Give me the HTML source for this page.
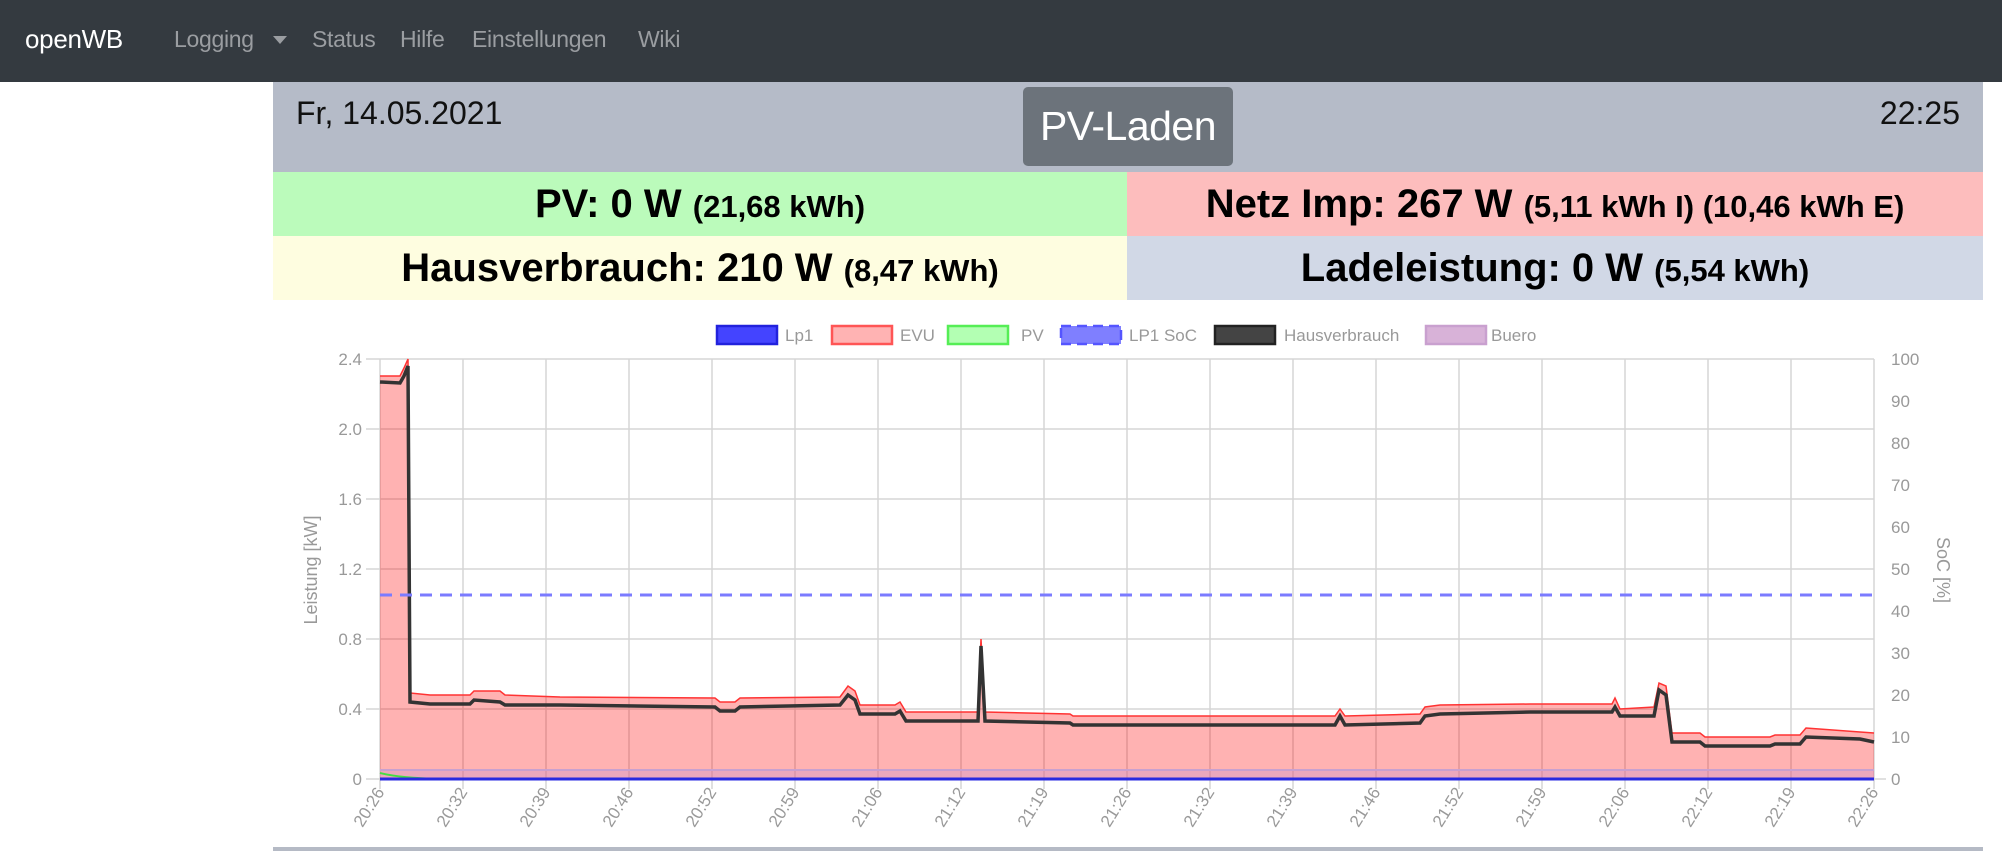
<!DOCTYPE html>
<html><head><meta charset="utf-8"><style>
*{margin:0;padding:0;box-sizing:border-box}
body{width:2002px;height:853px;background:#fff;font-family:"Liberation Sans",Arial,sans-serif;position:relative;overflow:hidden}
.nav{position:absolute;left:0;top:0;width:2002px;height:82px;background:#343a40}
.nav span{position:absolute;top:26px;font-size:23px;color:#9a9da1;letter-spacing:-0.3px}
.brand{color:#fff!important;font-size:26px!important;top:24px!important}
.hdr{position:absolute;left:273px;top:82px;width:1710px;height:90px;background:#b5bbc8}
.btn{position:absolute;left:1023px;top:87px;width:210px;height:79px;background:#6c737b;border-radius:5px;color:#fff;font-size:41px;text-align:center;line-height:79px;letter-spacing:-0.5px}
.cell{position:absolute;height:64px;text-align:center;font-weight:bold;font-size:40px;line-height:64px;color:#000;white-space:nowrap}
.cell small{font-size:31px}
</style></head><body>
<div class="nav">
<span class="brand" style="left:25px">openWB</span>
<span style="left:174px">Logging</span>
<span style="left:273px;top:36px;width:0;height:0;border-left:7px solid transparent;border-right:7px solid transparent;border-top:8px solid #9a9da1"></span>
<span style="left:312px">Status</span>
<span style="left:400px">Hilfe</span>
<span style="left:472px">Einstellungen</span>
<span style="left:638px">Wiki</span>
</div>
<div class="hdr"></div>
<div style="position:absolute;left:296px;top:95px;font-size:32px;color:#111">Fr, 14.05.2021</div>
<div style="position:absolute;right:42px;top:95px;font-size:32px;color:#111">22:25</div>
<div class="btn">PV-Laden</div>
<div class="cell" style="left:273px;top:172px;width:854px;background:#bbfbbb">PV: 0 W <small>(21,68 kWh)</small></div>
<div class="cell" style="left:1127px;top:172px;width:856px;background:#fdbdbd">Netz Imp: 267 W <small>(5,11 kWh I) (10,46 kWh E)</small></div>
<div class="cell" style="left:273px;top:236px;width:854px;background:#fefde0">Hausverbrauch: 210 W <small>(8,47 kWh)</small></div>
<div class="cell" style="left:1127px;top:236px;width:856px;background:#d1d8e6">Ladeleistung: 0 W <small>(5,54 kWh)</small></div>
<div style="position:absolute;left:273px;top:847px;width:1710px;height:4px;background:#b5bac5"></div>

<svg width="2002" height="853" style="position:absolute;left:0;top:0" font-family="Liberation Sans,Arial,sans-serif">
<g stroke="#d6d6d6" stroke-width="1.5">
<line x1="366" y1="359" x2="1874" y2="359"/><line x1="366" y1="429" x2="1874" y2="429"/><line x1="366" y1="499" x2="1874" y2="499"/><line x1="366" y1="569" x2="1874" y2="569"/><line x1="366" y1="639" x2="1874" y2="639"/><line x1="366" y1="709" x2="1874" y2="709"/><line x1="366" y1="779" x2="1886" y2="779"/>
<line x1="380" y1="359" x2="380" y2="789"/><line x1="463" y1="359" x2="463" y2="789"/><line x1="546" y1="359" x2="546" y2="789"/><line x1="629" y1="359" x2="629" y2="789"/><line x1="712" y1="359" x2="712" y2="789"/><line x1="795" y1="359" x2="795" y2="789"/><line x1="878" y1="359" x2="878" y2="789"/><line x1="961" y1="359" x2="961" y2="789"/><line x1="1044" y1="359" x2="1044" y2="789"/><line x1="1127" y1="359" x2="1127" y2="789"/><line x1="1210" y1="359" x2="1210" y2="789"/><line x1="1293" y1="359" x2="1293" y2="789"/><line x1="1376" y1="359" x2="1376" y2="789"/><line x1="1459" y1="359" x2="1459" y2="789"/><line x1="1542" y1="359" x2="1542" y2="789"/><line x1="1625" y1="359" x2="1625" y2="789"/><line x1="1708" y1="359" x2="1708" y2="789"/><line x1="1791" y1="359" x2="1791" y2="789"/><line x1="1874" y1="359" x2="1874" y2="789"/>
</g>
<path d="M380,779 L380,376 400,376 404,368 408,359 410,693 430,695 470,695 474,691 500,691 505,695 560,697 715,698 720,702 735,702 740,698 840,697 848,686 855,691 860,705 895,705 900,702 906,712 978,712 981,639 985,712 1070,714 1073,716 1335,716 1340,709 1345,716 1420,714 1425,707 1440,705 1530,704 1612,704 1615,698 1620,709 1654,707 1659,683 1666,686 1672,733 1700,733 1705,737 1770,737 1775,735 1800,735 1806,728 1860,732 1874,733 L1874,779 Z" fill="rgba(255,0,0,0.3)"/>
<path d="M380,376 400,376 404,368 408,359 410,693 430,695 470,695 474,691 500,691 505,695 560,697 715,698 720,702 735,702 740,698 840,697 848,686 855,691 860,705 895,705 900,702 906,712 978,712 981,639 985,712 1070,714 1073,716 1335,716 1340,709 1345,716 1420,714 1425,707 1440,705 1530,704 1612,704 1615,698 1620,709 1654,707 1659,683 1666,686 1672,733 1700,733 1705,737 1770,737 1775,735 1800,735 1806,728 1860,732 1874,733" fill="none" stroke="#f33" stroke-width="1.5"/>
<path d="M380,382 400,383 404,376 408,366 410,702 430,704 470,704 474,700 500,702 505,705 560,705 715,707 720,711 735,711 740,707 840,705 848,695 855,700 860,714 895,714 900,711 906,721 978,721 981,646 985,721 1070,723 1073,725 1335,725 1340,716 1345,725 1420,723 1425,716 1440,714 1530,712 1612,712 1615,707 1620,716 1654,716 1659,690 1666,695 1672,742 1700,742 1705,746 1770,746 1775,744 1800,744 1806,737 1860,739 1874,742" fill="none" stroke="#333" stroke-width="3.5"/>
<path d="M380,779 L380,770 1874,770 1874,779Z" fill="rgba(200,150,210,0.35)"/>
<line x1="380" y1="770" x2="1874" y2="770" stroke="#c9a0cf" stroke-width="2"/>
<path d="M380,773 Q400,778 440,779" fill="none" stroke="#4d4" stroke-width="2"/>
<line x1="380" y1="779" x2="1874" y2="779" stroke="#2a2ae0" stroke-width="3"/>
<line x1="380" y1="595" x2="1874" y2="595" stroke="#7b7bff" stroke-width="3" stroke-dasharray="12,8"/>
<g font-size="17" fill="#999" text-anchor="end">
<text x="362" y="365">2.4</text><text x="362" y="435">2.0</text><text x="362" y="505">1.6</text><text x="362" y="575">1.2</text><text x="362" y="645">0.8</text><text x="362" y="715">0.4</text><text x="362" y="785">0</text>
</g>
<g font-size="17" fill="#999">
<text x="1891" y="365">100</text><text x="1891" y="407">90</text><text x="1891" y="449">80</text><text x="1891" y="491">70</text><text x="1891" y="533">60</text><text x="1891" y="575">50</text><text x="1891" y="617">40</text><text x="1891" y="659">30</text><text x="1891" y="701">20</text><text x="1891" y="743">10</text><text x="1891" y="785">0</text>
<text transform="translate(317,570) rotate(-90)" text-anchor="middle" font-size="18">Leistung [kW]</text>
<text transform="translate(1937,570) rotate(90)" text-anchor="middle" font-size="18">SoC [%]</text>
</g>
<g font-size="17" fill="#999" text-anchor="end">
<text transform="translate(385,792) rotate(-58)">20:26</text><text transform="translate(468,792) rotate(-58)">20:32</text><text transform="translate(551,792) rotate(-58)">20:39</text><text transform="translate(634,792) rotate(-58)">20:46</text><text transform="translate(717,792) rotate(-58)">20:52</text><text transform="translate(800,792) rotate(-58)">20:59</text><text transform="translate(883,792) rotate(-58)">21:06</text><text transform="translate(966,792) rotate(-58)">21:12</text><text transform="translate(1049,792) rotate(-58)">21:19</text><text transform="translate(1132,792) rotate(-58)">21:26</text><text transform="translate(1215,792) rotate(-58)">21:32</text><text transform="translate(1298,792) rotate(-58)">21:39</text><text transform="translate(1381,792) rotate(-58)">21:46</text><text transform="translate(1464,792) rotate(-58)">21:52</text><text transform="translate(1547,792) rotate(-58)">21:59</text><text transform="translate(1630,792) rotate(-58)">22:06</text><text transform="translate(1713,792) rotate(-58)">22:12</text><text transform="translate(1796,792) rotate(-58)">22:19</text><text transform="translate(1879,792) rotate(-58)">22:26</text>
</g>
<g stroke-width="2.5">
<rect x="717" y="326" width="60" height="18" fill="#4444ff" stroke="#2222dd"/>
<rect x="832" y="326" width="60" height="18" fill="#ffb3b3" stroke="#f55"/>
<rect x="948" y="326" width="60" height="18" fill="#b3ffb3" stroke="#5e5"/>
<rect x="1061" y="326" width="60" height="18" fill="#7f7fff" stroke="#5555ff" stroke-dasharray="10,6"/>
<rect x="1215" y="326" width="60" height="18" fill="#444" stroke="#222"/>
<rect x="1426" y="326" width="60" height="18" fill="#d8b2d8" stroke="#c9a0cf"/>
</g>
<g font-size="17" fill="#999">
<text x="785" y="341">Lp1</text><text x="900" y="341">EVU</text><text x="1021" y="341">PV</text><text x="1129" y="341">LP1 SoC</text><text x="1284" y="341">Hausverbrauch</text><text x="1491" y="341">Buero</text>
</g>
</svg>
</body></html>
